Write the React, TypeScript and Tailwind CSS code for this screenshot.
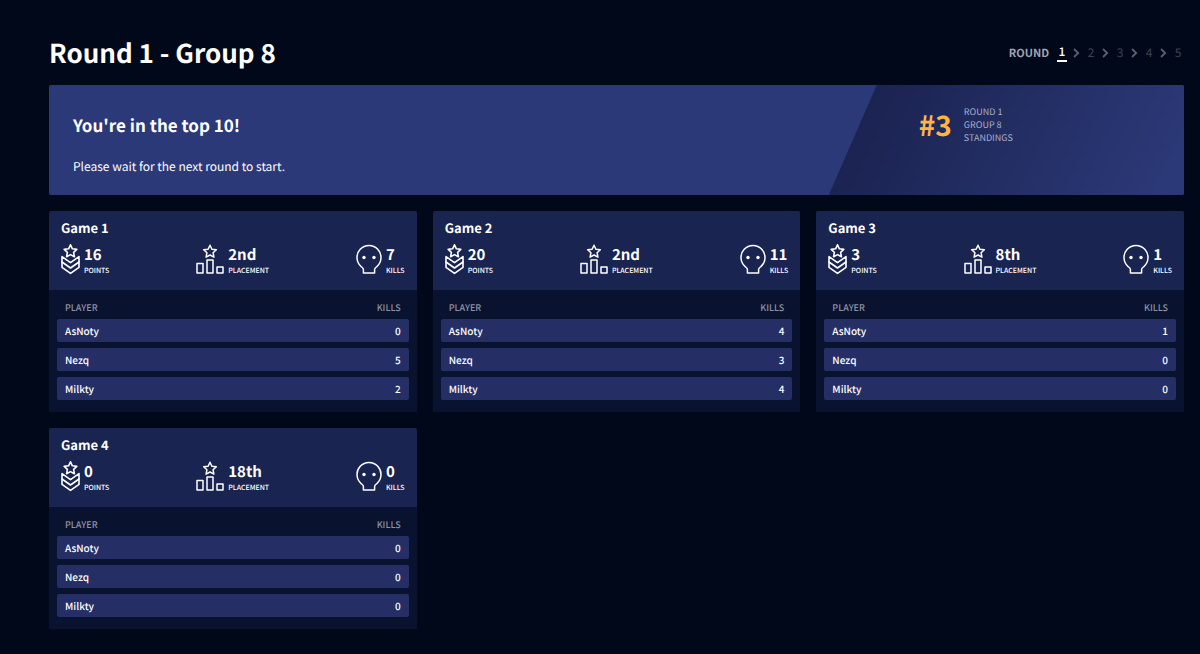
import { Fragment } from "react";
import type { ReactNode } from "react";

type Player = { name: string; kills: number };

type Game = {
  title: string;
  points: number;
  placement: string;
  kills: number;
  players: Player[];
};

const rounds = [1, 2, 3, 4, 5];

const games: Game[] = [
  {
    title: "Game 1",
    points: 16,
    placement: "2nd",
    kills: 7,
    players: [
      { name: "AsNoty", kills: 0 },
      { name: "Nezq", kills: 5 },
      { name: "Milkty", kills: 2 },
    ],
  },
  {
    title: "Game 2",
    points: 20,
    placement: "2nd",
    kills: 11,
    players: [
      { name: "AsNoty", kills: 4 },
      { name: "Nezq", kills: 3 },
      { name: "Milkty", kills: 4 },
    ],
  },
  {
    title: "Game 3",
    points: 3,
    placement: "8th",
    kills: 1,
    players: [
      { name: "AsNoty", kills: 1 },
      { name: "Nezq", kills: 0 },
      { name: "Milkty", kills: 0 },
    ],
  },
  {
    title: "Game 4",
    points: 0,
    placement: "18th",
    kills: 0,
    players: [
      { name: "AsNoty", kills: 0 },
      { name: "Nezq", kills: 0 },
      { name: "Milkty", kills: 0 },
    ],
  },
];

const STAR = "M0-6.4 1.9-2.4 6.3-1.8 3.1 1.2 3.9 5.5 0 3.4-3.9 5.5-3.1 1.2-6.3-1.8-1.9-2.4Z";

const PointsIcon = () => (
  <svg width="19" height="32" viewBox="0 0 19 32" fill="none" stroke="white" strokeWidth="1.6" strokeLinejoin="round" strokeLinecap="round" aria-hidden="true">
    <path d={STAR} transform="translate(9.5 7.2)" />
    <path d="M1 12.6V23.4L9.5 29.4 18 23.4V12.6L9.5 18.6Z" />
    <path d="M1 18 9.5 24 18 18" />
  </svg>
);

const PlacementIcon = () => (
  <svg width="28" height="32" viewBox="0 0 28 32" fill="none" stroke="white" strokeWidth="1.5" strokeLinejoin="round" aria-hidden="true">
    <path d={STAR} transform="translate(14 7.6)" />
    <rect x="1" y="19.5" width="6" height="9.5" />
    <rect x="11" y="16" width="6" height="13" />
    <rect x="21" y="23" width="6" height="6" />
  </svg>
);

const KillsIcon = () => (
  <svg width="26" height="32" viewBox="0 0 26 32" fill="none" stroke="white" strokeWidth="1.5" strokeLinejoin="round" aria-hidden="true">
    <path d="M7.4 29V25.4C7.4 24.2 6.6 23.7 5.4 22.8A12 12 0 1 1 20.6 22.8C19.4 23.7 18.6 24.2 18.6 25.4V29Z" />
    <circle cx="8" cy="13.5" r="1.7" fill="white" stroke="none" />
    <circle cx="18" cy="13.5" r="1.7" fill="white" stroke="none" />
  </svg>
);

const Stat = ({ icon, value, label }: { icon: ReactNode; value: string | number; label: string }) => (
  <div className="flex items-start gap-1">
    {icon}
    <div className="pt-[3px]">
      <div className="text-[15px] leading-4 font-bold">{value}</div>
      <div className="text-[7px] leading-4 font-medium">{label}</div>
    </div>
  </div>
);

const GameCard = ({ game }: { game: Game }) => (
  <section className="overflow-hidden rounded-t-xs bg-[#09122e]">
    <div className="bg-[#1a2451] px-3 pt-2 pb-3">
      <h3 className="text-[13px] leading-[17px] font-bold">{game.title}</h3>
      <div className="mt-2 flex h-[34px] items-start justify-between">
        <Stat icon={<PointsIcon />} value={game.points} label="POINTS" />
        <Stat icon={<PlacementIcon />} value={game.placement} label="PLACEMENT" />
        <Stat icon={<KillsIcon />} value={game.kills} label="KILLS" />
      </div>
    </div>
    <div className="px-2 pb-1.5">
      <table className="w-full border-separate border-spacing-x-0 border-spacing-y-1.5">
        <thead>
          <tr className="text-[9px] leading-[10px] text-[#8c92a6]">
            <th className="px-2 pt-[7px] pb-0 text-left font-medium">PLAYER</th>
            <th className="px-2 pt-[7px] pb-0 text-right font-medium">KILLS</th>
          </tr>
        </thead>
        <tbody>
          {game.players.map((player) => (
            <tr key={player.name} className="text-[10px] leading-[23px] font-medium">
              <td className="rounded-l-xs bg-[#252f66] px-2 py-0">{player.name}</td>
              <td className="rounded-r-xs bg-[#252f66] px-2 py-0 text-right">{player.kills}</td>
            </tr>
          ))}
        </tbody>
      </table>
    </div>
  </section>
);

const RoundNav = () => (
  <nav aria-label="Rounds" className="flex items-center text-[#3b4254]">
    <span className="mr-2 text-[11px] leading-4 font-bold text-[#a0a4b0]">ROUND</span>
    {rounds.map((round, index) => (
      <Fragment key={round}>
        {index > 0 && (
          <svg className="mx-1.5" width="7" height="10" viewBox="0 0 7 10" fill="none" stroke="#5a6070" strokeWidth="1.8" aria-hidden="true">
            <path d="M1 1 5.2 5 1 9" />
          </svg>
        )}
        <a
          href={`#round-${round}`}
          className={
            round === 1
              ? "w-2.5 border-b-2 border-white text-center text-xs leading-4 font-medium text-white"
              : "w-2.5 text-center text-xs leading-4"
          }
        >
          {round}
        </a>
      </Fragment>
    ))}
  </nav>
);

const App = () => {
  return (
    <main className="min-h-screen bg-[#000819] pt-8 pr-4 pb-6 pl-[49px] font-['Noto_Sans_CJK_SC','Open_Sans',sans-serif] text-white [text-rendering:geometricPrecision]">
      <header className="flex h-[53px] items-start justify-between">
        <h1 className="text-[26px] leading-[42px] font-bold">Round 1 - Group 8</h1>
        <div className="pt-3 pr-px">
          <RoundNav />
        </div>
      </header>

      <section className="flex overflow-hidden rounded-xs bg-[#2c3978]">
        <div className="flex-1 px-6 pt-[27px] pb-[18px]">
          <h2 className="text-[17px] leading-[25px] font-bold">You're in the top 10!</h2>
          <p className="mt-5 text-xs leading-5">Please wait for the next round to start.</p>
        </div>
        <div className="flex w-[31.3%] items-start gap-3 bg-linear-115 from-[#1a2350] from-10% to-[#2c3978] to-95% pt-5 pl-[90px] [clip-path:polygon(48px_0,100%_0,100%_100%,0_100%)]">
          <span className="text-[28px] leading-10 font-bold text-[#ffb444]">#3</span>
          <p className="text-[9px] leading-[13px] text-[#a9afca]">
            ROUND 1
            <br />
            GROUP 8
            <br />
            STANDINGS
          </p>
        </div>
      </section>

      <div className="mt-4 grid grid-cols-1 gap-4 sm:grid-cols-2 lg:grid-cols-3">
        {games.map((game) => (
          <GameCard key={game.title} game={game} />
        ))}
      </div>
    </main>
  );
};

export default App;
